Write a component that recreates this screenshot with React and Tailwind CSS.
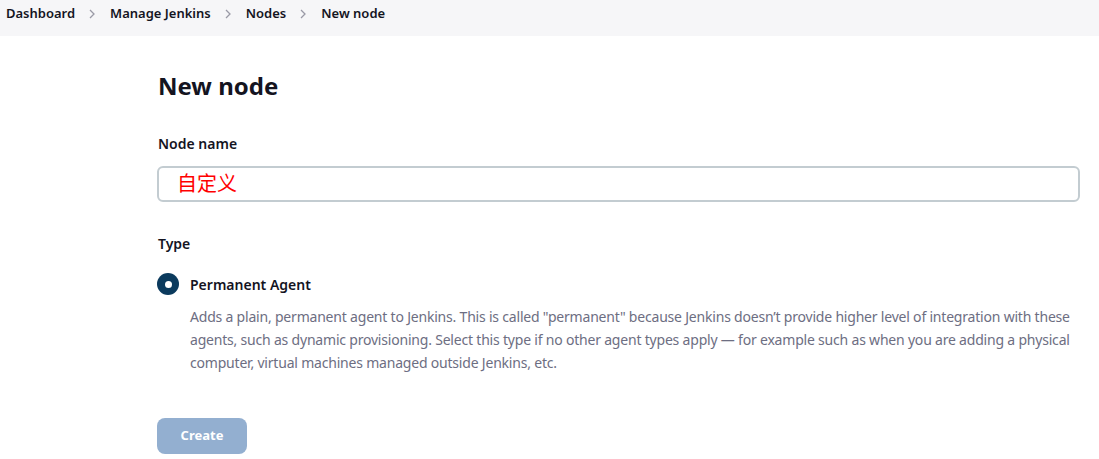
export default function App() {
  const crumbs = ["Dashboard", "Manage Jenkins", "Nodes", "New node"];
  return (
    <div
      className="min-h-screen bg-white text-[#14141f]"
      style={{ fontFamily: '"Noto Sans", "Noto Sans CJK SC", sans-serif' }}
    >
      {/* BREADCRUMBS */}
      <div className="h-[36px] bg-[#f6f6f8] flex items-center pl-[6px] pb-[9px] text-[13px] font-semibold">
        {crumbs.map((c, i) => (
          <div key={c} className="flex items-center">
            <span>{c}</span>
            {i < crumbs.length - 1 && (
              <svg
                width="8"
                height="10"
                viewBox="0 0 8 10"
                className="ml-[13px] mr-[14px]"
                fill="none"
                stroke="#9a9aa6"
                strokeWidth="1.3"
              >
                <path d="M2 1l4 4-4 4" />
              </svg>
            )}
          </div>
        ))}
      </div>

      {/* CONTENT */}
      <div className="pl-[157px] pr-[19px] pt-[34px]">
        <h1 className="text-[24px] font-bold leading-[32px] ml-[1px]">New node</h1>

        <div className="mt-[31px] text-[14px] font-semibold ml-[1px]">Node name</div>
        <div className="mt-[12px] h-[36px] border-2 border-[#c3ccd1] rounded-[6px] flex items-center pl-[18px]">
          <span className="text-[#ff0000] text-[20px]">自定义</span>
        </div>

        <div className="mt-[31px] text-[14px] font-semibold ml-[1px]">Type</div>

        <div className="mt-[19px] flex items-center gap-[11px]">
          <div className="w-[22px] h-[22px] rounded-full bg-[#0b3a5d] flex items-center justify-center">
            <div className="w-[7px] h-[7px] rounded-full bg-white" />
          </div>
          <span className="text-[14px] font-semibold">Permanent Agent</span>
        </div>
        <p className="mt-[10px] ml-[33px] -mr-[12px] text-[14px] leading-[23px] tracking-[-0.2px] text-[#6d6e82]">
          Adds a plain, permanent agent to Jenkins. This is called "permanent" because Jenkins doesn’t provide higher level of integration with these agents, such as dynamic provisioning. Select this type if no other agent types apply — for example such as when you are adding a physical computer, virtual machines managed outside Jenkins, etc.
        </p>

        <button className="mt-[44px] w-[90px] h-[36px] rounded-[8px] bg-[#93afd0] text-white text-[13px] font-bold">
          Create
        </button>
      </div>
    </div>
  );
}
